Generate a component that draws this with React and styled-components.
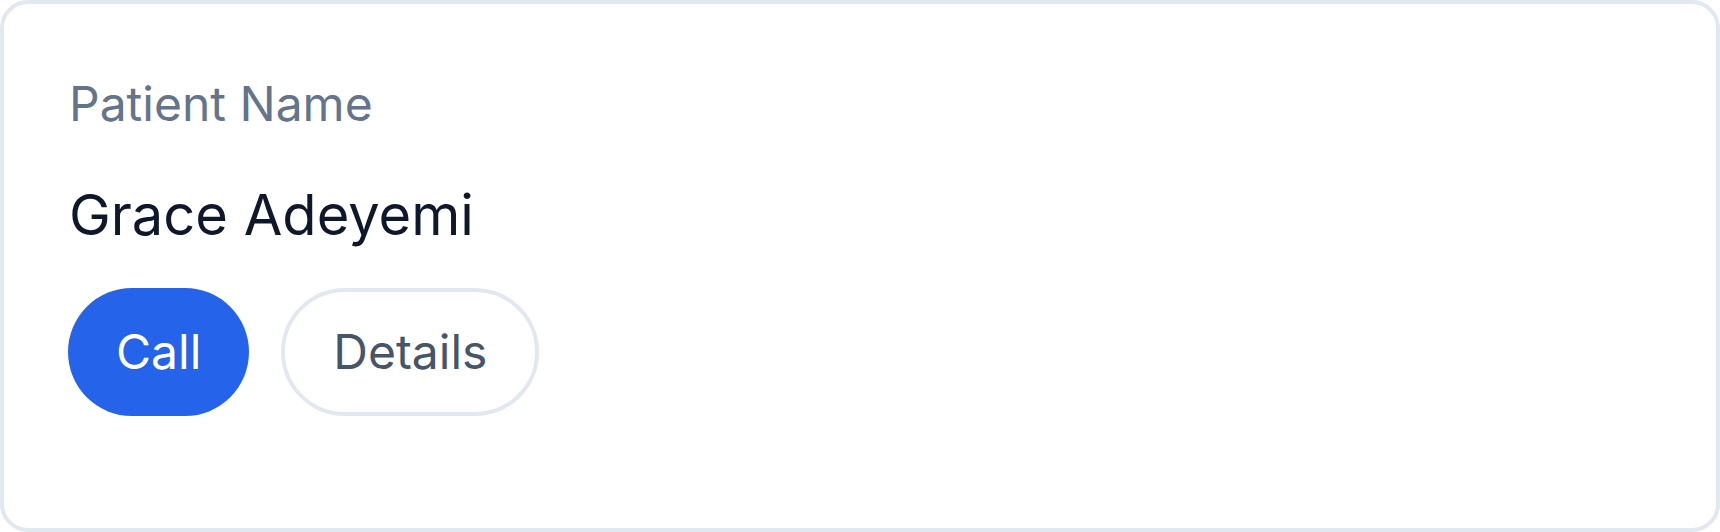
import React from 'react';
import styled, { createGlobalStyle } from 'styled-components';

const GlobalStyle = createGlobalStyle`
  * {
    box-sizing: border-box;
  }
  body {
    margin: 0;
    background: #ffffff;
    font-family: Inter, "Noto Sans", sans-serif;
  }
`;

const Card = styled.div`
  width: 1720px;
  height: 532px;
  background: #ffffff;
  border: 4px solid #e2e8f0;
  border-radius: 28px;
  padding: 64px 64px 64px 65px;
  display: flex;
  flex-direction: column;
  align-items: flex-start;
`;

const Label = styled.div`
  font-size: 48px;
  line-height: 72px;
  color: #64748b;
`;

const Name = styled.div`
  margin-top: 33px;
  font-size: 56px;
  line-height: 84px;
  color: #0f172a;
`;

const Actions = styled.div`
  display: flex;
  gap: 32px;
  margin-top: 31px;
  margin-left: -1px;
`;

const Button = styled.button`
  height: 128px;
  padding: 0 48px;
  border-radius: 9999px;
  font-family: Inter, "Noto Sans", sans-serif;
  font-size: 48px;
  line-height: 1;
  cursor: pointer;
  display: inline-flex;
  align-items: center;
  border: ${(p) => (p.$primary ? 'none' : '4px solid #e2e8f0')};
  background: ${(p) => (p.$primary ? '#2563eb' : '#ffffff')};
  color: ${(p) => (p.$primary ? '#ffffff' : '#475569')};
`;

export default function App() {
  return (
    <>
      <GlobalStyle />
      <Card>
        <Label>Patient Name</Label>
        <Name>Grace Adeyemi</Name>
        <Actions>
          <Button $primary>Call</Button>
          <Button>Details</Button>
        </Actions>
      </Card>
    </>
  );
}
